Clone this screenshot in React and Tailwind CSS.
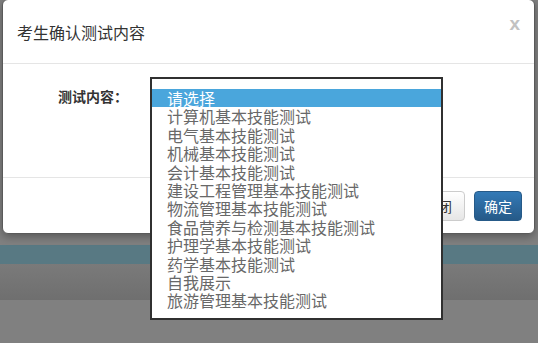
import React from "react";

const options = [
  "请选择",
  "计算机基本技能测试",
  "电气基本技能测试",
  "机械基本技能测试",
  "会计基本技能测试",
  "建设工程管理基本技能测试",
  "物流管理基本技能测试",
  "食品营养与检测基本技能测试",
  "护理学基本技能测试",
  "药学基本技能测试",
  "自我展示",
  "旅游管理基本技能测试",
];

const font = { fontFamily: '"Noto Sans CJK SC", "Liberation Sans", sans-serif' };

export default function App() {
  return (
    <div className="relative w-[538px] h-[343px] overflow-hidden bg-[#808080]" style={font}>
      {/* page behind the overlay */}
      <div className="flex flex-col">
        <div className="h-[245px]" />
        <div className="h-[19px] bg-[#587983]" />
        <div className="h-[36px] bg-gradient-to-b from-[#7a7a7a] to-[#6f6f6f]" />
      </div>

      {/* modal */}
      <div className="absolute left-[2px] top-[-1px] w-[533px] h-[235px] bg-white rounded-[6px] border border-[#5a5a5a] flex flex-col shadow-[0_3px_8px_rgba(0,0,0,0.3)]">
        <div className="h-[64px] flex items-center justify-between pl-[14px] pr-[14px] border-b border-[#e5e5e5]">
          <span className="text-[16px] text-[#333]">考生确认测试内容</span>
          <span className="text-[19px] font-bold leading-none text-[#c2c2c2] mb-[16px]" style={{ fontFamily: '"Liberation Sans", sans-serif' }}>x</span>
        </div>
        <div className="h-[113px] pl-[55px] pt-[19px]">
          <span className="text-[14px] font-bold text-[#333]">测试内容：</span>
        </div>
        <div className="flex-1 border-t border-[#e5e5e5] flex justify-end items-start gap-[9px] pt-[13px] pr-[12px]">
          <button className="h-[30px] px-[12px] rounded-[4px] border border-[#ccc] bg-gradient-to-b from-white to-[#e6e6e6] text-[14px] text-[#333]">
            关闭
          </button>
          <button className="h-[30px] w-[48px] rounded-[4px] border border-[#265a88] bg-gradient-to-b from-[#337ab7] to-[#265a88] text-[14px] text-white">
            确定
          </button>
        </div>
      </div>

      {/* open dropdown list */}
      <div className="absolute left-[150px] top-[77px] w-[293px] h-[243px] bg-white border-2 border-[#303030] pt-[10px]">
        {options.map((o, i) => (
          <div
            key={o}
            className={
              "h-[18.4px] leading-[18.4px] pl-[15px] text-[16px] whitespace-nowrap " +
              (i === 0 ? "bg-[#4aa6dc] text-white" : "text-[#686868]")
            }
          >
            {o}
          </div>
        ))}
      </div>
    </div>
  );
}
